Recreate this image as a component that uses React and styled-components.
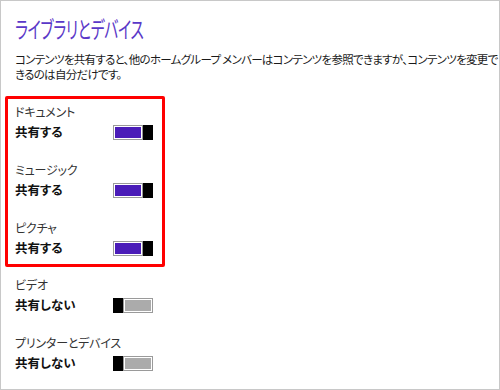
import React from "react";
import styled, { createGlobalStyle } from "styled-components";

const Global = createGlobalStyle`
  html, body { margin: 0; padding: 0; background: #fff; }
  body { font-family: "Noto Sans CJK JP", "Noto Sans", sans-serif; }
  * { box-sizing: border-box; }
`;

const Page = styled.div`
  width: 500px;
  height: 390px;
  border: 1px solid #c8c8c8;
  padding: 13px 0 0 14px;
  overflow: hidden;
  font-feature-settings: "palt";
`;

const Title = styled.h1`
  margin: 0;
  font-size: 23px;
  line-height: 28px;
  font-weight: 400;
  color: #5a38c8;
  letter-spacing: -0.5px;
  transform: scaleX(0.65);
  transform-origin: left center;
  white-space: nowrap;
`;

const Desc = styled.p`
  margin: 10px 0 0 0;
  width: 485px;
  font-size: 11.5px;
  line-height: 15px;
  color: #1a1a1a;
  letter-spacing: -0.7px;
`;

const Highlight = styled.div`
  margin: 14px 0 0 -10px;
  width: 160px;
  border: 3px solid #ff0000;
  border-radius: 2px;
  padding: 5px 0 8px 7px;
`;

const Plain = styled.div`
  padding: 10px 0 0 0;
`;

const Item = styled.div`
  display: flex;
  flex-direction: column;
  & + & { margin-top: 22px; }
`;

const Label = styled.div`
  font-size: 12px;
  line-height: 16px;
  color: #333;
  letter-spacing: -0.2px;
`;

const Row = styled.div`
  display: flex;
  align-items: center;
  width: 138px;
  margin-top: 4px;
  justify-content: space-between;
`;

const State = styled.div`
  font-size: 12.5px;
  line-height: 16px;
  font-weight: 700;
  color: #111;
`;

const Toggle = styled.div`
  display: flex;
  flex-direction: ${(p) => (p.$on ? "row" : "row-reverse")};
  width: 40px;
  height: 15px;
`;

const Track = styled.div`
  flex: 1;
  border: 1px solid #9a9a9a;
  padding: 1px;
  background: #fff;
  &::after {
    content: "";
    display: block;
    height: 100%;
    background: ${(p) => (p.$on ? "#4a1cb8" : "#ababab")};
  }
`;

const Thumb = styled.div`
  width: 10px;
  height: 15px;
  background: #000;
`;

function Setting({ label, on }) {
  return (
    <Item>
      <Label>{label}</Label>
      <Row>
        <State>{on ? "共有する" : "共有しない"}</State>
        <Toggle $on={on}>
          <Track $on={on} />
          <Thumb />
        </Toggle>
      </Row>
    </Item>
  );
}

export default function App() {
  return (
    <>
      <Global />
      <Page>
        <Title>ライブラリとデバイス</Title>
        <Desc>
          コンテンツを共有すると、他のホームグループ メンバーはコンテンツを参照できますが、コンテンツを変更できるのは自分だけです。
        </Desc>
        <Highlight>
          <Setting label="ドキュメント" on />
          <Setting label="ミュージック" on />
          <Setting label="ピクチャ" on />
        </Highlight>
        <Plain>
          <Setting label="ビデオ" />
          <Setting label="プリンターとデバイス" />
        </Plain>
      </Page>
    </>
  );
}
